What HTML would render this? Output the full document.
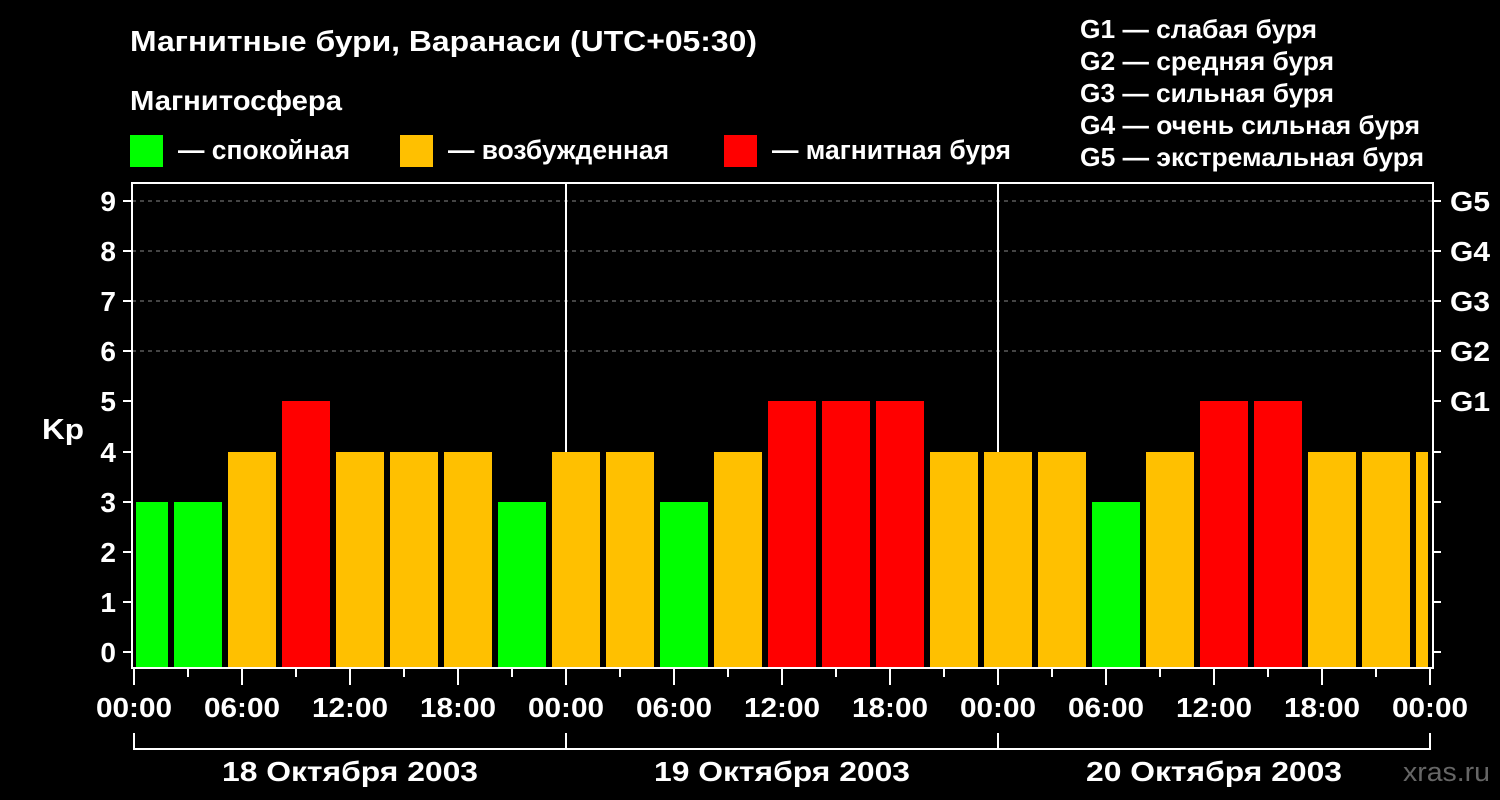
<!DOCTYPE html>
<html><head><meta charset="utf-8"><style>
html,body{margin:0;padding:0;background:#000;}
svg{display:block}
text{font-family:"Liberation Sans",sans-serif;font-weight:bold;fill:#fff}
</style></head><body>
<svg width="1500" height="800" viewBox="0 0 1500 800" xmlns="http://www.w3.org/2000/svg">
<rect width="1500" height="800" fill="#000"/>
<text x="130" y="51" font-size="29" textLength="627" lengthAdjust="spacingAndGlyphs">Магнитные бури, Варанаси (UTC+05:30)</text>
<text x="130" y="110" font-size="28" textLength="212" lengthAdjust="spacingAndGlyphs">Магнитосфера</text>
<rect x="130" y="135" width="33" height="32" fill="#00ff00"/>
<text x="178" y="159" font-size="27" textLength="172" lengthAdjust="spacingAndGlyphs">— спокойная</text>
<rect x="400" y="135" width="33" height="32" fill="#ffc000"/>
<text x="448" y="159" font-size="27" textLength="221" lengthAdjust="spacingAndGlyphs">— возбужденная</text>
<rect x="724" y="135" width="33" height="32" fill="#ff0000"/>
<text x="772" y="159" font-size="27" textLength="239" lengthAdjust="spacingAndGlyphs">— магнитная буря</text>
<g font-size="26">
<text x="1080" y="38" textLength="237" lengthAdjust="spacingAndGlyphs">G1 — слабая буря</text>
<text x="1080" y="70" textLength="254" lengthAdjust="spacingAndGlyphs">G2 — средняя буря</text>
<text x="1080" y="102" textLength="254" lengthAdjust="spacingAndGlyphs">G3 — сильная буря</text>
<text x="1080" y="134" textLength="340" lengthAdjust="spacingAndGlyphs">G4 — очень сильная буря</text>
<text x="1080" y="166" textLength="344" lengthAdjust="spacingAndGlyphs">G5 — экстремальная буря</text>
</g>
<g stroke="#888" stroke-width="1" stroke-dasharray="4,4">
<line x1="132" y1="201" x2="1433" y2="201"/>
<line x1="132" y1="251" x2="1433" y2="251"/>
<line x1="132" y1="301" x2="1433" y2="301"/>
<line x1="132" y1="351" x2="1433" y2="351"/>
</g>
<g stroke="#fff" stroke-width="2">
<line x1="566" y1="183" x2="566" y2="668"/>
<line x1="998" y1="183" x2="998" y2="668"/>
</g>
<g>
<rect x="136" y="502" width="32" height="165" fill="#00ff00"/>
<rect x="174" y="502" width="48" height="165" fill="#00ff00"/>
<rect x="228" y="452" width="48" height="215" fill="#ffc000"/>
<rect x="282" y="401" width="48" height="266" fill="#ff0000"/>
<rect x="336" y="452" width="48" height="215" fill="#ffc000"/>
<rect x="390" y="452" width="48" height="215" fill="#ffc000"/>
<rect x="444" y="452" width="48" height="215" fill="#ffc000"/>
<rect x="498" y="502" width="48" height="165" fill="#00ff00"/>
<rect x="552" y="452" width="48" height="215" fill="#ffc000"/>
<rect x="606" y="452" width="48" height="215" fill="#ffc000"/>
<rect x="660" y="502" width="48" height="165" fill="#00ff00"/>
<rect x="714" y="452" width="48" height="215" fill="#ffc000"/>
<rect x="768" y="401" width="48" height="266" fill="#ff0000"/>
<rect x="822" y="401" width="48" height="266" fill="#ff0000"/>
<rect x="876" y="401" width="48" height="266" fill="#ff0000"/>
<rect x="930" y="452" width="48" height="215" fill="#ffc000"/>
<rect x="984" y="452" width="48" height="215" fill="#ffc000"/>
<rect x="1038" y="452" width="48" height="215" fill="#ffc000"/>
<rect x="1092" y="502" width="48" height="165" fill="#00ff00"/>
<rect x="1146" y="452" width="48" height="215" fill="#ffc000"/>
<rect x="1200" y="401" width="48" height="266" fill="#ff0000"/>
<rect x="1254" y="401" width="48" height="266" fill="#ff0000"/>
<rect x="1308" y="452" width="48" height="215" fill="#ffc000"/>
<rect x="1362" y="452" width="48" height="215" fill="#ffc000"/>
<rect x="1416" y="452" width="12" height="215" fill="#ffc000"/>
</g>
<rect x="132" y="183" width="1301" height="485" fill="none" stroke="#fff" stroke-width="2"/>
<path stroke="#fff" stroke-width="2" fill="none" d="
M123 652H131M123 602H131M123 552H131M123 502H131M123 452H131M123 401H131M123 351H131M123 301H131M123 251H131M123 201H131
M1433 652H1441M1433 602H1441M1433 552H1441M1433 502H1441M1433 452H1441M1433 401H1441M1433 351H1441M1433 301H1441M1433 251H1441M1433 201H1441
M134 669V685M188 669V677M242 669V685M296 669V677M350 669V685M404 669V677M458 669V685M512 669V677
M566 669V685M620 669V677M674 669V685M728 669V677M782 669V685M836 669V677M890 669V685M944 669V677
M998 669V685M1052 669V677M1106 669V685M1160 669V677M1214 669V685M1268 669V677M1322 669V685M1376 669V677M1430 669V685"/>
<g font-size="28" text-anchor="end">
<text x="116" y="662">0</text><text x="116" y="612">1</text><text x="116" y="562">2</text><text x="116" y="512">3</text><text x="116" y="462">4</text>
<text x="116" y="411">5</text><text x="116" y="361">6</text><text x="116" y="311">7</text><text x="116" y="261">8</text><text x="116" y="211">9</text>
</g>
<g font-size="28">
<text x="1450" y="211" textLength="40" lengthAdjust="spacingAndGlyphs">G5</text>
<text x="1450" y="261" textLength="40" lengthAdjust="spacingAndGlyphs">G4</text>
<text x="1450" y="311" textLength="40" lengthAdjust="spacingAndGlyphs">G3</text>
<text x="1450" y="361" textLength="40" lengthAdjust="spacingAndGlyphs">G2</text>
<text x="1450" y="411" textLength="40" lengthAdjust="spacingAndGlyphs">G1</text>
</g>
<text x="42" y="439" font-size="29" textLength="42" lengthAdjust="spacingAndGlyphs">Kp</text>
<g font-size="28" text-anchor="middle">
<text x="134" y="717" textLength="76" lengthAdjust="spacingAndGlyphs">00:00</text><text x="242" y="717" textLength="76" lengthAdjust="spacingAndGlyphs">06:00</text><text x="350" y="717" textLength="76" lengthAdjust="spacingAndGlyphs">12:00</text><text x="458" y="717" textLength="76" lengthAdjust="spacingAndGlyphs">18:00</text>
<text x="566" y="717" textLength="76" lengthAdjust="spacingAndGlyphs">00:00</text><text x="674" y="717" textLength="76" lengthAdjust="spacingAndGlyphs">06:00</text><text x="782" y="717" textLength="76" lengthAdjust="spacingAndGlyphs">12:00</text><text x="890" y="717" textLength="76" lengthAdjust="spacingAndGlyphs">18:00</text>
<text x="998" y="717" textLength="76" lengthAdjust="spacingAndGlyphs">00:00</text><text x="1106" y="717" textLength="76" lengthAdjust="spacingAndGlyphs">06:00</text><text x="1214" y="717" textLength="76" lengthAdjust="spacingAndGlyphs">12:00</text><text x="1322" y="717" textLength="76" lengthAdjust="spacingAndGlyphs">18:00</text>
<text x="1430" y="717" textLength="76" lengthAdjust="spacingAndGlyphs">00:00</text>
<text x="350" y="781" textLength="256" lengthAdjust="spacingAndGlyphs">18 Октября 2003</text>
<text x="782" y="781" textLength="256" lengthAdjust="spacingAndGlyphs">19 Октября 2003</text>
<text x="1214" y="781" textLength="256" lengthAdjust="spacingAndGlyphs">20 Октября 2003</text>
</g>
<path d="M134 733V749H1430V733M566 733V749M998 733V749" stroke="#fff" stroke-width="2" fill="none"/>
<text x="1490" y="781" font-size="27" text-anchor="end" textLength="87" lengthAdjust="spacingAndGlyphs" style="fill:#666;font-weight:normal">xras.ru</text>
</svg>
</body></html>
